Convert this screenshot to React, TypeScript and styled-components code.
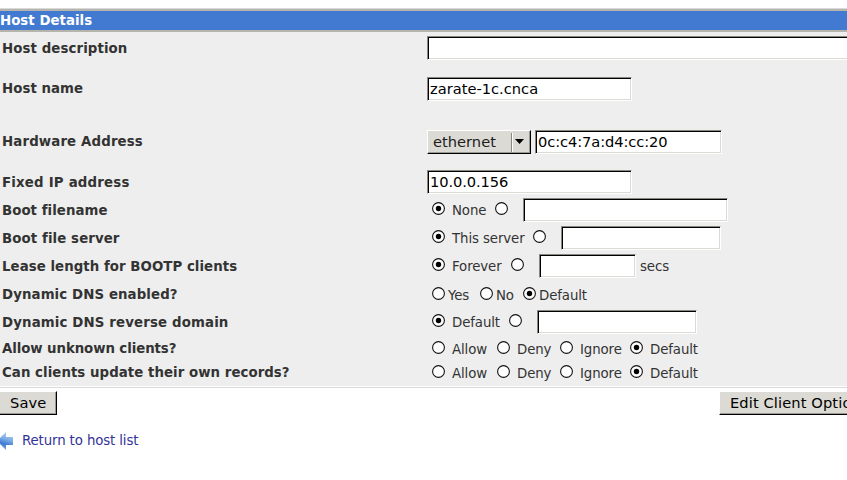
import React from "react";
import styled, { createGlobalStyle } from "styled-components";

const GlobalStyle = createGlobalStyle`
  html, body { margin: 0; background: #fff; overflow: hidden; }
  body {
    font-family: "DejaVu Sans", sans-serif;
    font-size: 13.33px;
    color: #333;
  }
  * { box-sizing: border-box; }
`;

const Page = styled.main`
  width: 847px;
  height: 480px;
  overflow: hidden;
  padding-top: 8px;
`;

const Panel = styled.section`
  height: 380px;
  border-top: 1px solid #d9d9d9;
  border-bottom: 1px solid #d9d9d9;
`;

const PanelHeader = styled.h1`
  margin: 0;
  height: 23px;
  border-top: 2px solid #b5b5ae;
  border-bottom: 2px solid #b5b5ae;
  background: #427ad1;
  color: #fff;
  font-size: 13.33px;
  font-weight: bold;
  letter-spacing: 0.03px;
  line-height: 20px;
`;

const Form = styled.form`
  height: 354px;
  padding-top: 2px;
  background: #eee;
`;

const Row = styled.div<{ $h: number }>`
  display: grid;
  grid-template-columns: 427px 1fr;
  align-items: center;
  height: ${(p) => p.$h}px;
`;

const Label = styled.label<{ $up?: boolean; $ls?: number }>`
  padding-left: 2px;
  padding-top: ${(p) => (p.$up ? 0 : 2)}px;
  font-weight: bold;
  letter-spacing: ${(p) => p.$ls ?? 0.05}px;
  line-height: 18px;
  white-space: nowrap;
`;

const Field = styled.div`
  display: flex;
  align-items: center;
`;

const Input = styled.input<{ $w: number; $ml?: number; $ls?: number }>`
  flex: none;
  width: ${(p) => p.$w}px;
  height: 24px;
  margin: 0 0 0 ${(p) => p.$ml ?? 0}px;
  padding: 0 2px 2px;
  border: 1px solid;
  border-color: #88887f #fff #fff #88887f;
  border-radius: 0;
  outline: none;
  background: #fff;
  box-shadow: inset 1px 1px 0 #000, inset -1px -1px 0 #dcdad5;
  color: #000;
  font: 14.67px "DejaVu Sans", sans-serif;
  letter-spacing: ${(p) => p.$ls ?? 0}px;
`;

const Select = styled.div`
  display: flex;
  align-items: center;
  width: 104px;
  height: 24px;
  padding: 0 6px 0 5px;
  border: 1px solid;
  border-color: #fff #000 #000 #fff;
  box-shadow: inset -1px -1px 0 #9b9a91;
  background: #dcdad5;
  color: #1c1c1c;
  font: 14.67px "DejaVu Sans", sans-serif;
`;

const SelectValue = styled.span`
  padding-bottom: 2px;
`;

const SelectDivider = styled.span`
  width: 2px;
  height: 19px;
  margin: 0 2px 0 auto;
  border-left: 1px solid #88887f;
  border-right: 1px solid #fff;
`;

const SelectArrow = styled.svg`
  width: 9px;
  height: 5px;
  margin-bottom: 1px;
`;

const RadioMark = styled.svg<{ $ml: number; $up: number }>`
  flex: none;
  width: 13px;
  height: 13px;
  margin-left: ${(p) => p.$ml}px;
  margin-bottom: ${(p) => p.$up}px;
`;

const Text = styled.span<{ $w: number; $ml: number; $down?: number }>`
  flex: none;
  width: ${(p) => p.$w}px;
  margin-left: ${(p) => p.$ml}px;
  margin-top: ${(p) => (p.$down ?? 1) * 2}px;
  letter-spacing: -0.1px;
  line-height: 18px;
  white-space: nowrap;
`;

const Actions = styled.div`
  display: flex;
  justify-content: space-between;
  height: 27px;
  margin-top: 3px;
`;

const Button = styled.button<{ $w: number; $bleed?: boolean }>`
  flex: none;
  width: ${(p) => p.$w}px;
  height: 24px;
  margin: 0;
  padding: 0 0 2px 10px;
  border: solid #000;
  border-color: #fff #000 #000 #fff;
  border-width: ${(p) => (p.$bleed ? "1px 1px 1px 0" : "1px 0 1px 1px")};
  border-radius: 0;
  box-shadow: inset ${(p) => (p.$bleed ? "-1px" : "0")} -1px 0 #9b9a91;
  background: #dcdad5;
  color: #000;
  font: 14.67px "DejaVu Sans", sans-serif;
  letter-spacing: 0.1px;
  text-align: left;
  white-space: nowrap;
  overflow: hidden;
`;

const BackLink = styled.a`
  display: flex;
  align-items: center;
  gap: 9px;
  height: 20px;
  margin-top: 12px;
  color: #333399;
  letter-spacing: -0.12px;
  text-decoration: none;
`;

const ArrowIcon = styled.svg`
  width: 13px;
  height: 18px;
  margin-top: 2px;
`;

function Radio({ on, ml = 5, up = 3 }: { on?: boolean; ml?: number; up?: number }) {
  return (
    <RadioMark $ml={ml} $up={up} viewBox="0 0 13 13">
      <circle cx="6.5" cy="6.5" r="5.9" fill="#fff" stroke="#111" strokeWidth="1.1" />
      {on && <circle cx="6.5" cy="6.5" r="2.7" fill="#000" />}
    </RadioMark>
  );
}

function AccessChoice() {
  return (
    <Field>
      <Radio up={1} />
      <Text $ml={7} $w={45} $down={2}>Allow</Text>
      <Radio ml={0} up={1} />
      <Text $ml={7} $w={43} $down={2}>Deny</Text>
      <Radio ml={0} up={1} />
      <Text $ml={7} $w={50} $down={2}>Ignore</Text>
      <Radio ml={0} up={1} on />
      <Text $ml={7} $w={60} $down={2}>Default</Text>
    </Field>
  );
}

export default function App() {
  return (
    <>
      <GlobalStyle />
      <Page>
        <Panel>
          <PanelHeader>Host Details</PanelHeader>
          <Form>
            <Row $h={28}>
              <Label $ls={0.09}>Host description</Label>
              <Field><Input $w={440} /></Field>
            </Row>
            <Row $h={54}>
              <Label $up>Host name</Label>
              <Field><Input $w={205} defaultValue="zarate-1c.cnca" /></Field>
            </Row>
            <Row $h={52}>
              <Label $up $ls={0.14}>Hardware Address</Label>
              <Field>
                <Select>
                  <SelectValue>ethernet</SelectValue>
                  <SelectDivider />
                  <SelectArrow viewBox="0 0 9 5"><path d="M0 0h9L4.5 5z" /></SelectArrow>
                </Select>
                <Input $w={187} $ml={4} $ls={-0.1} defaultValue="0c:c4:7a:d4:cc:20" />
              </Field>
            </Row>
            <Row $h={28}>
              <Label $ls={0.2}>Fixed IP address</Label>
              <Field><Input $w={205} $ls={-0.1} defaultValue="10.0.0.156" /></Field>
            </Row>
            <Row $h={28}>
              <Label>Boot filename</Label>
              <Field>
                <Radio on />
                <Text $ml={7} $w={43}>None</Text>
                <Radio ml={0} />
                <Input $ml={15} $w={205} />
              </Field>
            </Row>
            <Row $h={28}>
              <Label $ls={0.1}>Boot file server</Label>
              <Field>
                <Radio on />
                <Text $ml={7} $w={81}>This server</Text>
                <Radio ml={0} />
                <Input $ml={15} $w={160} />
              </Field>
            </Row>
            <Row $h={28}>
              <Label>Lease length for BOOTP clients</Label>
              <Field>
                <Radio on />
                <Text $ml={7} $w={59}>Forever</Text>
                <Radio ml={0} />
                <Input $ml={15} $w={97} />
                <Text $ml={4} $w={40}>secs</Text>
              </Field>
            </Row>
            <Row $h={28}>
              <Label $ls={0.1}>Dynamic DNS enabled?</Label>
              <Field>
                <Radio up={1} />
                <Text $ml={3} $w={32} $down={2}>Yes</Text>
                <Radio ml={0} up={1} />
                <Text $ml={3} $w={27} $down={2}>No</Text>
                <Radio ml={0} up={1} on />
                <Text $ml={3} $w={60} $down={2}>Default</Text>
              </Field>
            </Row>
            <Row $h={28}>
              <Label $ls={0.14}>Dynamic DNS reverse domain</Label>
              <Field>
                <Radio on />
                <Text $ml={7} $w={57}>Default</Text>
                <Radio ml={0} />
                <Input $ml={15} $w={160} />
              </Field>
            </Row>
            <Row $h={24}>
              <Label $ls={-0.08}>Allow unknown clients?</Label>
              <AccessChoice />
            </Row>
            <Row $h={24}>
              <Label>Can clients update their own records?</Label>
              <AccessChoice />
            </Row>
          </Form>
        </Panel>
        <Actions>
          <Button $w={57} $bleed>Save</Button>
          <Button $w={128}>Edit Client Options</Button>
        </Actions>
        <BackLink href="#">
          <ArrowIcon viewBox="0 0 13 18">
            <defs>
              <linearGradient id="arrow" x1="0.6" y1="0" x2="0.3" y2="1">
                <stop offset="0" stopColor="#b4d0f2" />
                <stop offset="0.4" stopColor="#78a8e4" />
                <stop offset="0.65" stopColor="#3f7bd2" />
                <stop offset="1" stopColor="#8ab0e6" />
              </linearGradient>
            </defs>
            <path d="M-3 9L6 0v5h7v8H6v5z" fill="url(#arrow)" />
          </ArrowIcon>
          Return to host list
        </BackLink>
      </Page>
    </>
  );
}
